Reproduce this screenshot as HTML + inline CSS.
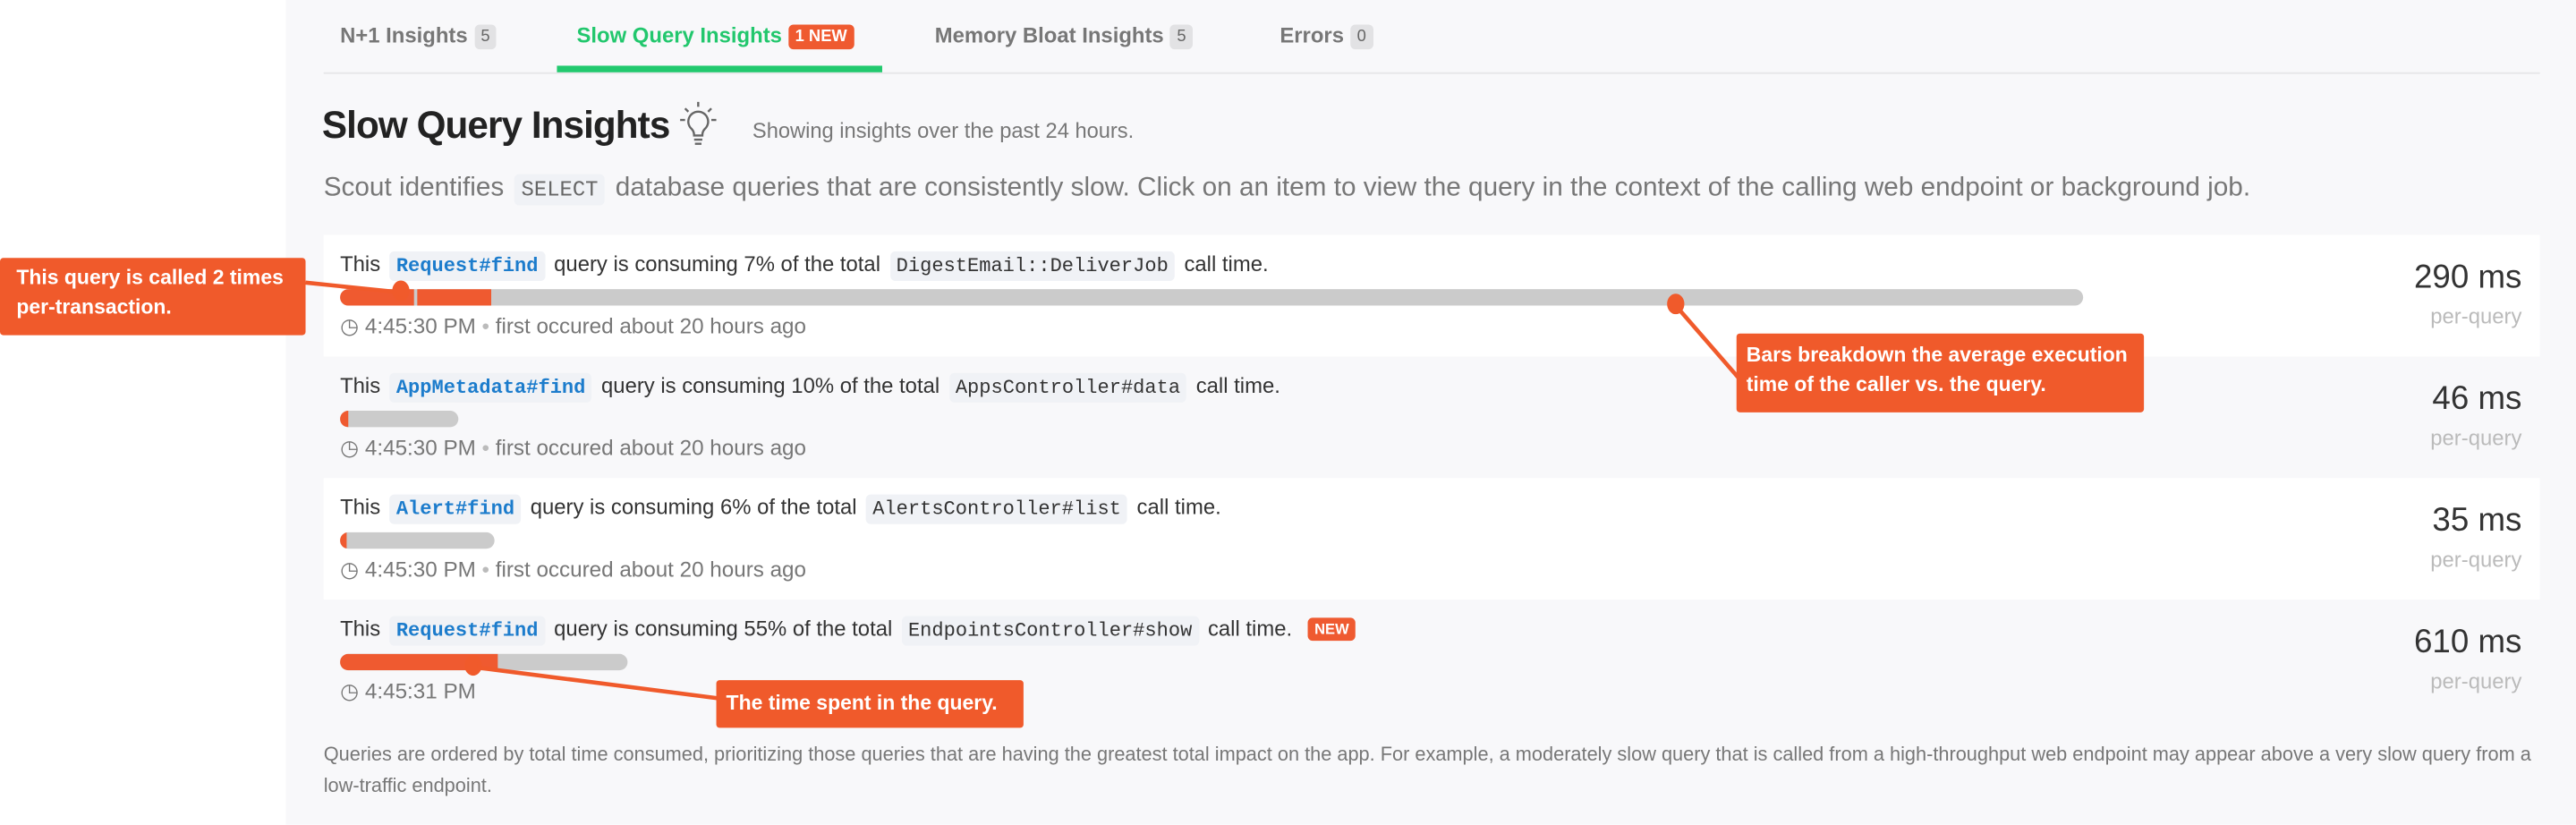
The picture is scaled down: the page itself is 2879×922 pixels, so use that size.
<!DOCTYPE html>
<html><head><meta charset="utf-8"><style>
html,body{margin:0;padding:0;width:2879px;height:921px;overflow:hidden;background:#fff;font-family:"Liberation Sans",sans-serif;}
#w{position:absolute;left:0;top:0;width:1568px;height:502px;transform:scale(1.8361);transform-origin:0 0;}
.main{position:absolute;left:174px;top:0;width:1394px;height:502px;background:#f8f8fa;}
.a{position:absolute;white-space:nowrap;}
.tab{font-size:13px;font-weight:bold;color:#777;top:14px;}
.bd{display:inline-block;background:#e2e2e4;color:#666;font-size:10px;font-weight:normal;border-radius:3px;padding:2px 4px;margin-left:4px;vertical-align:1px;}
.card{position:absolute;left:197px;width:1349px;height:74px;}
.t{position:absolute;left:10px;top:10px;font-size:13px;color:#333;white-space:nowrap;}
code{font-family:"Liberation Mono",monospace;font-size:12px;background:#f0f2f6;padding:2px 4px;border-radius:3px;margin:0 2px;color:#333;}
code.b{color:#1c7ccc;font-weight:bold;}
.bar{position:absolute;left:10px;top:33px;height:10px;border-radius:5px;background:#cbcbcb;overflow:hidden;}
.bar i{position:absolute;top:0;height:10px;background:#ef5a30;}
.tm{position:absolute;left:10px;top:48px;font-size:13.2px;color:#777;white-space:nowrap;}
.ms{position:absolute;right:11px;top:15px;font-size:20px;color:#333;text-align:right;}
.pq{position:absolute;right:11px;top:42px;font-size:13px;color:#bbb;}
.co{position:absolute;background:#f05a2b;color:#fff;font-weight:bold;font-size:12.5px;border-radius:2px;line-height:18px;}
.new{display:inline-block;background:#ef5a30;color:#fff;font-size:9px;font-weight:bold;border-radius:3px;padding:2px 4px;margin-left:6px;vertical-align:1px;}
</style></head><body><div id="w">
<div class="main"></div>
<div class="a tab" style="left:207px">N+1 Insights<span class="bd">5</span></div>
<div class="a tab" style="left:351px;color:#22c76d">Slow Query Insights<span class="bd" style="background:#ef5a30;color:#fff;font-weight:bold">1 NEW</span></div>
<div class="a tab" style="left:569px">Memory Bloat Insights<span class="bd">5</span></div>
<div class="a tab" style="left:779px">Errors<span class="bd">0</span></div>
<div class="a" style="left:197px;top:44px;width:1349px;height:1px;background:#e6e6e8"></div>
<div class="a" style="left:339px;top:40px;width:198px;height:4px;background:#22c96e"></div>
<div class="a" style="left:196px;top:63px;font-size:23px;font-weight:bold;color:#222;letter-spacing:-0.5px">Slow Query Insights</div>
<svg class="a" style="left:412px;top:60px" width="26" height="32" viewBox="0 0 26 32" fill="none" stroke="#666" stroke-width="1.3"><path d="M13 2v3M5 6l2 2M21 6l-2 2M2 13h3M24 13h-3"/><path d="M13 8a6 6 0 0 0-4 10.5c1 1 1.5 2.5 1.5 4h5c0-1.5.5-3 1.5-4A6 6 0 0 0 13 8z"/><path d="M10.5 25h5M11 27.5h4"/></svg>
<div class="a" style="left:458px;top:72px;font-size:12.9px;color:#777">Showing insights over the past 24 hours.</div>
<div class="a" style="left:197px;top:105px;font-size:16.2px;color:#777">Scout identifies <code style="font-size:13px;color:#666">SELECT</code> database queries that are consistently slow. Click on an item to view the query in the context of the calling web endpoint or background job.</div>

<div class="card" style="top:143px;background:#fff">
<div class="t">This <code class="b">Request#find</code> query is consuming 7% of the total <code>DigestEmail::DeliverJob</code> call time.</div>
<div class="bar" style="width:1061px"><i style="left:0;width:45px"></i><i style="left:47px;width:45px"></i></div>
<div class="tm">◷ 4:45:30 PM <span style="color:#bbb">•</span> first occured about 20 hours ago</div>
<div class="ms">290 ms</div><div class="pq">per-query</div></div>

<div class="card" style="top:217px">
<div class="t">This <code class="b">AppMetadata#find</code> query is consuming 10% of the total <code>AppsController#data</code> call time.</div>
<div class="bar" style="width:72px"><i style="left:0;width:5px"></i></div>
<div class="tm">◷ 4:45:30 PM <span style="color:#bbb">•</span> first occured about 20 hours ago</div>
<div class="ms">46 ms</div><div class="pq">per-query</div></div>

<div class="card" style="top:291px;background:#fff">
<div class="t">This <code class="b">Alert#find</code> query is consuming 6% of the total <code>AlertsController#list</code> call time.</div>
<div class="bar" style="width:94px"><i style="left:0;width:4px"></i></div>
<div class="tm">◷ 4:45:30 PM <span style="color:#bbb">•</span> first occured about 20 hours ago</div>
<div class="ms">35 ms</div><div class="pq">per-query</div></div>

<div class="card" style="top:365px">
<div class="t">This <code class="b">Request#find</code> query is consuming 55% of the total <code>EndpointsController#show</code> call time. <span class="new">NEW</span></div>
<div class="bar" style="width:175px"><i style="left:0;width:96px"></i></div>
<div class="tm">◷ 4:45:31 PM</div>
<div class="ms">610 ms</div><div class="pq">per-query</div></div>

<div class="a" style="left:197px;top:450px;font-size:11.85px;color:#777;line-height:19px">Queries are ordered by total time consumed, prioritizing those queries that are having the greatest total impact on the app. For example, a moderately slow query that is called from a high-throughput web endpoint may appear above a very slow query from a<br>low-traffic endpoint.</div>

<svg class="a" style="left:0;top:0" width="1568" height="502"><g stroke="#f05a2b" stroke-width="2.5" fill="#f05a2b"><line x1="186" y1="172" x2="244" y2="178"/><ellipse cx="244" cy="177" rx="4" ry="5"/><line x1="1020" y1="186" x2="1060" y2="232"/><ellipse cx="1020" cy="185" rx="4" ry="5"/><line x1="288" y1="406" x2="437" y2="425"/><ellipse cx="288" cy="405" rx="4" ry="5"/></g></svg>
<div class="co" style="left:0;top:157px;width:176px;height:44px;padding:3px 0 0 10px">This query is called 2 times<br>per-transaction.</div>
<div class="co" style="left:1057px;top:203px;width:242px;height:44px;padding:4px 0 0 6px">Bars breakdown the average execution<br>time of the caller vs. the query.</div>
<div class="co" style="left:436px;top:414px;width:181px;height:24px;padding:5px 0 0 6px">The time spent in the query.</div>
</div></body></html>
